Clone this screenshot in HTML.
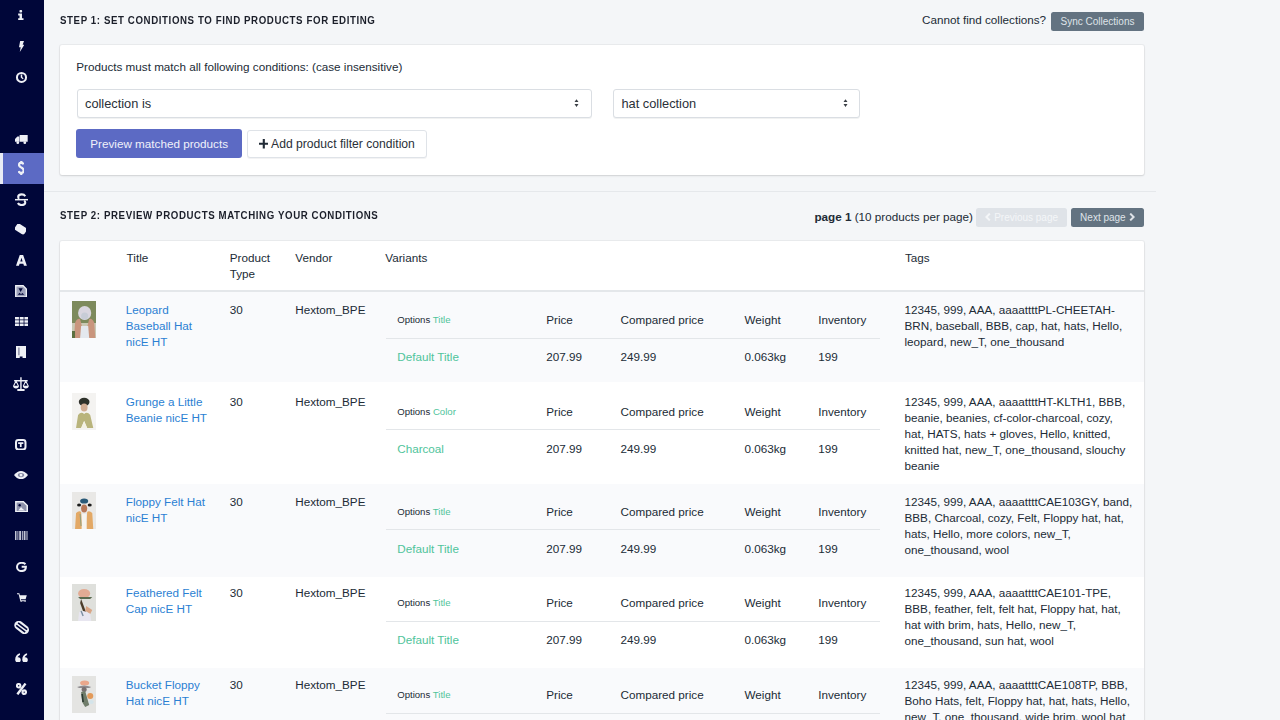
<!DOCTYPE html>
<html><head><meta charset="utf-8">
<style>
*{box-sizing:border-box;margin:0;padding:0}
html,body{width:1280px;height:720px;overflow:hidden;background:#f4f6f8;font-family:"Liberation Sans",sans-serif;color:#212b36;font-size:11.7px;line-height:16px}
.abs{position:absolute}
#side{position:absolute;left:0;top:0;width:44px;height:720px;background:#000639}
#side .act{position:absolute;left:2.6px;width:41.4px;height:30.9px;background:#5c6ac4}#side .actl{position:absolute;left:0;width:2.6px;height:30.9px;background:#e9ebf5}
#side .ic{position:absolute;display:block}
.step{position:absolute;font-weight:bold;font-size:9.7px;letter-spacing:0.6px;color:#1b1f2a;line-height:12px;transform:scaleY(1.17);transform-origin:0 0;white-space:nowrap}
.card{position:absolute;background:#fff;border-radius:2px;box-shadow:0 0 0 1px rgba(63,63,68,.05),0 1px 2px 0 rgba(63,63,68,.15)}
.sel{position:absolute;height:29px;background:#fff;border:1px solid #dadee3;border-radius:3px;box-shadow:0 1px 0 rgba(22,29,37,.06);font-size:12.8px;line-height:27px;padding-left:7.5px;color:#2a3038}
.sel .arr{position:absolute;right:11.5px;top:9.3px}
.btn{position:absolute;height:29px;border-radius:3px;line-height:29px;font-size:11.7px;text-align:center}
.sbtn{position:absolute;background:#637381;color:#dfe3e8;border-radius:2.5px;font-size:10px;text-align:center}
a{color:#2b7fd3;text-decoration:none}
.row{position:absolute;left:0;width:1084.3px}
.light{background:#f9fafc}
.c{position:absolute}
.vt{position:absolute;left:325.5px;width:494px}
.vh{position:absolute;left:0;top:0;width:494px;height:36.7px;border-bottom:1.5px solid #e3e6e9}
.vb{position:absolute;left:0;top:37px;width:494px;height:37px}
.opt{font-size:9.6px}
.g{color:#4fc49b}
</style></head><body>
<div id="side">
<div class="actl" style="top:152.9px"></div><div class="act" style="top:152.9px"></div>
<svg class="ic" style="left:18.30px;top:9.70px" width="5.60" height="10.20" viewBox="0 0 6.6 11.2" preserveAspectRatio="none" fill="#eef0f6"><rect x="1.7" y="0" width="3.2" height="2.7" rx="1"/><path d="M0.2 3.9H4.7V9H6.5V11.2H0.2V9H1.8V6H0.2z"/></svg>
<svg class="ic" style="left:18.70px;top:41.40px" width="5.00" height="10.90" viewBox="0 0 5.6 11.9" preserveAspectRatio="none" fill="#eef0f6"><path d="M1.3 0H5.6L4.1 4.2H5.8L0.9 11.9L1.9 6.7H0z"/></svg>
<svg class="ic" style="left:15.00px;top:71.70px" width="12.90" height="10.90" viewBox="0 0 13.9 11.9" preserveAspectRatio="none" fill="#eef0f6"><circle cx="7" cy="6" r="4.9" fill="none" stroke="#eef0f6" stroke-width="2.2"/><path d="M6.2 2.8H7.8V5.5L9.3 7L8.3 8L6.2 5.9z"/></svg>
<svg class="ic" style="left:15.40px;top:134.90px" width="12.70" height="9.00" viewBox="0 0 13.7 10.1" preserveAspectRatio="none" fill="#eef0f6"><path d="M5 0H13.7V7.6H5zM0 7.6V4.4L2.6 1.6H4.6V7.6z"/><circle cx="3" cy="8.6" r="1.5"/><circle cx="10.6" cy="8.6" r="1.5"/></svg>
<svg class="ic" style="left:17.90px;top:161.10px" width="6.50" height="14.00" viewBox="0 0 7.5 15" preserveAspectRatio="none" fill="#eef0f6"><path d="M6.4 3.6C6 2.6 5.1 1.9 3.75 1.9C2.2 1.9 1.1 2.8 1.1 4.1C1.1 5.5 2.2 6.1 3.75 6.9C5.4 7.7 6.5 8.5 6.5 10.2C6.5 11.8 5.3 12.9 3.75 12.9C2.2 12.9 1.1 12.1 0.7 10.8M3.75 0V1.9M3.75 12.9V15" fill="none" stroke="#eef0f6" stroke-width="2.5"/></svg>
<svg class="ic" style="left:14.75px;top:193.00px" width="13.35" height="13.40" viewBox="0 0 14.3 14.4" preserveAspectRatio="none" fill="#eef0f6"><path d="M11 3.4C10.3 2.2 9 1.5 7.2 1.5C5 1.5 3.4 2.7 3.4 4.4C3.4 5.3 3.8 5.9 4.5 6.3M9.8 8.2C10.6 8.7 11 9.4 11 10.3C11 12 9.4 13 7.2 13C5.2 13 3.8 12.2 3.1 10.8" fill="none" stroke="#eef0f6" stroke-width="2.2"/><rect x="0" y="6.4" width="14.3" height="1.6"/></svg>
<svg class="ic" style="left:14.75px;top:224.25px" width="11.50" height="10.25" viewBox="0 0 12.5 11.25" preserveAspectRatio="none" fill="#eef0f6"><rect x="-6.2" y="-4.1" width="12.4" height="8.2" rx="2.4" transform="translate(6.25 5.6) rotate(33)"/></svg>
<svg class="ic" style="left:16.00px;top:254.90px" width="10.90" height="10.85" viewBox="0 0 11.9 11.85" preserveAspectRatio="none" fill="#eef0f6"><path fill-rule="evenodd" d="M4.1 0H7.8L11.9 11.85H8.7L8 9.6H3.9L3.2 11.85H0zM4.7 7H7.2L5.95 3z"/></svg>
<svg class="ic" style="left:15.40px;top:284.90px" width="12.10" height="12.60" viewBox="0 0 13.1 13.6" preserveAspectRatio="none" fill="#eef0f6"><path d="M0.8 0.8H8.8L12.3 4.3V12.8H0.8z" fill="#9da1ba" stroke="#eef0f6" stroke-width="1.5"/><path d="M3.8 3.5H8.4L6.1 7.6z" fill="#000639"/><path d="M3 10.5L5 8.5 6.5 10 8 8.6 10 10.5z" fill="#000639"/></svg>
<svg class="ic" style="left:14.75px;top:316.75px" width="13.35" height="9.00" viewBox="0 0 14.3 10" preserveAspectRatio="none" fill="#eef0f6"><rect x="0.00" y="0.00" width="4.2" height="2.75"/><rect x="0.00" y="3.62" width="4.2" height="2.75"/><rect x="0.00" y="7.24" width="4.2" height="2.75"/><rect x="5.05" y="0.00" width="4.2" height="2.75"/><rect x="5.05" y="3.62" width="4.2" height="2.75"/><rect x="5.05" y="7.24" width="4.2" height="2.75"/><rect x="10.10" y="0.00" width="4.2" height="2.75"/><rect x="10.10" y="3.62" width="4.2" height="2.75"/><rect x="10.10" y="7.24" width="4.2" height="2.75"/></svg>
<svg class="ic" style="left:16.00px;top:345.50px" width="10.25" height="12.75" viewBox="0 0 11.25 13.75" preserveAspectRatio="none" fill="#eef0f6"><path d="M0 0H11.25V13.75H7.2V11.2H4.1V13.75H0z"/><rect x="2.6" y="1.6" width="1.2" height="8.4" fill="#000639" opacity=".55"/></svg>
<svg class="ic" style="left:12.90px;top:376.75px" width="15.85" height="14.00" viewBox="0 0 16.85 15" preserveAspectRatio="none" fill="#eef0f6"><path d="M1.2 3.3H15.6V4.7H1.2zM7.7 0.3H9.2V12.8H7.7zM4.6 12.8H12.3V15H4.6z"/><path d="M3.2 4.2L0.6 9.6M3.2 4.2L5.8 9.6M13.6 4.2L11 9.6M13.6 4.2L16.2 9.6" stroke="#eef0f6" stroke-width="1.1" fill="none"/><path d="M0 9.3H6.4C6.4 11 5 12.2 3.2 12.2C1.4 12.2 0 11 0 9.3zM10.45 9.3H16.85C16.85 11 15.45 12.2 13.65 12.2C11.85 12.2 10.45 11 10.45 9.3z"/></svg>
<svg class="ic" style="left:15.20px;top:438.80px" width="11.50" height="11.50" viewBox="0 0 12.5 12.5" preserveAspectRatio="none" fill="#eef0f6"><rect x="1.1" y="1.1" width="10.3" height="10.3" rx="2.6" fill="none" stroke="#eef0f6" stroke-width="2.2"/><path d="M3.4 3.5H9.1V5.3H7.2V8.8H5.3V5.3H3.4z"/></svg>
<svg class="ic" style="left:14.30px;top:471.30px" width="14.00" height="8.20" viewBox="0 0 15 9.2" preserveAspectRatio="none" fill="#eef0f6"><path d="M0 4.6C2.5 1.1 5 0 7.5 0S12.5 1.1 15 4.6C12.5 8.1 10 9.2 7.5 9.2S2.5 8.1 0 4.6z"/><ellipse cx="7.5" cy="4.6" rx="3.4" ry="2.4" fill="#000639" opacity=".45"/><circle cx="7.5" cy="4.6" r="1.5"/></svg>
<svg class="ic" style="left:15.20px;top:500.50px" width="13.10" height="11.50" viewBox="0 0 14.1 12.5" preserveAspectRatio="none" fill="#eef0f6"><path d="M0.9 0.8H9L13.2 5V11.7H0.9z" fill="#8d91ab" stroke="#eef0f6" stroke-width="1.6"/><circle cx="5" cy="4.6" r="1.3" fill="#000639"/><path d="M3.5 10.3L6.5 6.5 8.4 8.6 10.8 10.3z" fill="#eef0f6"/></svg>
<svg class="ic" style="left:14.80px;top:530.50px" width="13.50" height="9.80" viewBox="0 0 14.5 10.8" preserveAspectRatio="none" fill="#eef0f6"><g fill="#c3c6d6"><rect x="0" y="0" width="1.6" height="10.8"/><rect x="2.6" y="0" width="1" height="10.8"/><rect x="4.5" y="0" width="2" height="10.8"/><rect x="7.4" y="0" width="1" height="10.8"/><rect x="9.3" y="0" width="2" height="10.8"/><rect x="12.3" y="0" width="0.9" height="10.8"/><rect x="13.6" y="0" width="0.9" height="10.8"/></g></svg>
<svg class="ic" style="left:16.00px;top:562.30px" width="10.90" height="9.80" viewBox="0 0 11.9 10.8" preserveAspectRatio="none" fill="#eef0f6"><path d="M10.3 2.5C9.3 1.4 7.8 0.9 6.1 0.9C3.2 0.9 1.1 3 1.1 5.5C1.1 8 3.2 10 6 10C8.7 10 10.8 8.3 10.8 5.3H6.2" fill="none" stroke="#eef0f6" stroke-width="2.2"/></svg>
<svg class="ic" style="left:17.10px;top:592.50px" width="9.80" height="9.70" viewBox="0 0 10.8 10.7" preserveAspectRatio="none" fill="#eef0f6"><path d="M0 0.2H2.6L3.1 2.4H10.8L9.5 6.9H4.2L4.5 7.9H9.8V9H3.7L1.8 1.4H0z"/><circle cx="4.6" cy="9.9" r="0.9"/><circle cx="8.9" cy="9.9" r="0.9"/></svg>
<svg class="ic" style="left:12.80px;top:620.50px" width="17.30" height="13.00" viewBox="0 0 18.3 14" preserveAspectRatio="none" fill="#eef0f6"><rect x="-8.6" y="-4.8" width="17.2" height="9.6" rx="4.8" transform="translate(9.15 7) rotate(38)"/><path d="M3.4 4.6L12.9 12M5.4 2L14.9 9.4" stroke="#000639" stroke-width="1.7"/></svg>
<svg class="ic" style="left:15.00px;top:652.80px" width="13.00" height="9.70" viewBox="0 0 14 10.7" preserveAspectRatio="none" fill="#eef0f6"><path d="M0.2 7.3C0.2 3.6 2.2 1 5.4 0.2V2.2C3.8 2.8 3 4 2.9 5.1C3 4.9 3.2 4.8 3.4 4.8C5 4.8 6.2 6 6.2 7.6C6.2 9.3 5 10.6 3.3 10.6C1.4 10.6 0.2 9.3 0.2 7.3zM7.8 7.3C7.8 3.6 9.8 1 13 0.2V2.2C11.4 2.8 10.6 4 10.5 5.1C10.6 4.9 10.8 4.8 11 4.8C12.6 4.8 13.8 6 13.8 7.6C13.8 9.3 12.6 10.6 10.9 10.6C9 10.6 7.8 9.3 7.8 7.3z"/></svg>
<svg class="ic" style="left:16.00px;top:682.90px" width="10.90" height="11.90" viewBox="0 0 11.9 12.9" preserveAspectRatio="none" fill="#eef0f6"><path d="M10.4 0.6L1.5 12.3" stroke="#eef0f6" stroke-width="2.6"/><circle cx="2.9" cy="3" r="1.9" fill="none" stroke="#eef0f6" stroke-width="2.3"/><circle cx="9" cy="9.9" r="1.9" fill="none" stroke="#eef0f6" stroke-width="2.3"/></svg>
</div>

<div class="step" style="left:60px;top:12.6px">STEP 1: SET CONDITIONS TO FIND PRODUCTS FOR EDITING</div>
<div class="abs" style="left:922px;top:12.3px">Cannot find collections?</div>
<div class="sbtn" style="left:1050.7px;top:12px;width:93.6px;height:19.1px;line-height:19.1px">Sync Collections</div>

<div class="card" style="left:60px;top:44.5px;width:1084.3px;height:130px">
  <div class="abs" style="left:16.2px;top:14.5px">Products must match all following conditions: (case insensitive)</div>
  <div class="sel" style="left:16.5px;top:44px;width:515px">collection is<svg class="arr" width="5" height="8.2" viewBox="0 0 6 9" preserveAspectRatio="none"><path d="M3 0.3L5.4 3.4H.6zM3 8.7L.6 5.6h4.8z" fill="#3a3f45"/></svg></div>
  <div class="sel" style="left:553px;top:44px;width:247px">hat collection<svg class="arr" width="5" height="8.2" viewBox="0 0 6 9" preserveAspectRatio="none"><path d="M3 0.3L5.4 3.4H.6zM3 8.7L.6 5.6h4.8z" fill="#3a3f45"/></svg></div>
  <div class="btn" style="left:16px;top:84.7px;width:166.3px;background:#5c6ac4;color:#f0f1fa">Preview matched products</div>
  <div class="btn" style="left:186.9px;top:85.2px;width:180.3px;height:28.2px;line-height:26.2px;border:1px solid #dfe3e8;background:#fff;color:#2a3038;box-shadow:0 1px 0 rgba(22,29,37,.05);text-align:left;padding-left:11px;font-size:12.15px"><svg width="9.6" height="9.6" viewBox="0 0 10 10" style="display:inline-block;vertical-align:-1px;margin-right:2.6px"><path d="M3.9 0H6.1V3.9H10V6.1H6.1V10H3.9V6.1H0V3.9H3.9z" fill="#212b36"/></svg>Add product filter condition</div>
</div>

<div class="abs" style="left:44px;top:190.5px;width:1111.5px;height:1.3px;background:#e5e8eb"></div>

<div class="step" style="left:60px;top:208px">STEP 2: PREVIEW PRODUCTS MATCHING YOUR CONDITIONS</div>
<div class="abs" style="left:814.4px;top:208.6px"><b>page 1</b> (10 products per page)</div>
<div class="sbtn" style="left:976.3px;top:207.5px;width:90.6px;height:19.4px;line-height:19.4px;background:#dfe3e8;color:#f4f6f8"><svg width="6" height="8" viewBox="0 0 6 8" style="display:inline-block;vertical-align:-0.5px;margin-right:3px"><path d="M4.8 0.6L1.4 4L4.8 7.4" fill="none" stroke="currentColor" stroke-width="2"/></svg>Previous page</div>
<div class="sbtn" style="left:1070.6px;top:207.5px;width:73.6px;height:19.4px;line-height:19.4px">Next page<svg width="6" height="8" viewBox="0 0 6 8" style="display:inline-block;vertical-align:-0.5px;margin-left:3px"><path d="M1.2 0.6L4.6 4L1.2 7.4" fill="none" stroke="currentColor" stroke-width="2"/></svg></div>

<div class="card" id="tbl" style="left:60px;top:240.7px;width:1084.3px;height:520px;overflow:hidden">
<div class="c" style="left:66.6px;top:9px">Title</div><div class="c" style="left:169.7px;top:9px">Product<br>Type</div><div class="c" style="left:235.3px;top:9px">Vendor</div><div class="c" style="left:325.3px;top:9px">Variants</div><div class="c" style="left:845px;top:9px">Tags</div><div class="c" style="left:0;top:49.6px;width:1084.3px;height:1.4px;background:#e4e7ea"></div>
<div class="row light" style="top:51.30px;height:90.20px"><div class="c img" style="left:12px;top:9.3px;overflow:hidden;width:24.3px;height:37px"><svg width="24.3" height="37" viewBox="0 0 24 37" preserveAspectRatio="none"><filter id="bla" x="-10%" y="-10%" width="120%" height="120%"><feGaussianBlur stdDeviation="0.6"/></filter><g filter="url(#bla)"><rect width="24" height="37" fill="#c9c8b4"/><rect x="0" y="0" width="24" height="22" fill="#7d8a5c"/><ellipse cx="12.5" cy="12" rx="6.5" ry="7" fill="#d9d6df"/><ellipse cx="12.5" cy="15" rx="3.5" ry="3.5" fill="#c7ccd6"/><path d="M2 37L3 22Q5 17 8 18L10 26H15L17 18Q20 17 22 22L23 37z" fill="#c9957d"/><path d="M8 37L9 25H16L17 37z" fill="#e4e8ee"/><rect x="0" y="30" width="3" height="7" fill="#5d7040"/></g></svg></div><div class="c" style="left:65.8px;top:10.0px"><a>Leopard<br>Baseball Hat<br>nicE HT</a></div><div class="c" style="left:169.7px;top:10.0px">30</div><div class="c" style="left:235.3px;top:10.0px">Hextom_BPE</div><div class="vt" style="top:10.0px"><div class="vh"><span class="c opt" style="left:11.7px;top:10.2px">Options <span class="g">Title</span></span><span class="c" style="left:160.7px;top:10.2px">Price</span><span class="c" style="left:235px;top:10.2px">Compared price</span><span class="c" style="left:359px;top:10.2px">Weight</span><span class="c" style="left:432.7px;top:10.2px">Inventory</span></div><div class="vb"><span class="c g" style="left:11.7px;top:10.2px">Default Title</span><span class="c" style="left:160.7px;top:10.2px">207.99</span><span class="c" style="left:235px;top:10.2px">249.99</span><span class="c" style="left:359px;top:10.2px">0.063kg</span><span class="c" style="left:432.7px;top:10.2px">199</span></div></div><div class="c" style="left:844.5px;top:10.0px;white-space:nowrap">12345, 999, AAA, aaaattttPL-CHEETAH-<br>BRN, baseball, BBB, cap, hat, hats, Hello,<br>leopard, new_T, one_thousand</div></div>
<div class="row" style="top:141.50px;height:101.60px"><div class="c img" style="left:12px;top:10.5px;overflow:hidden;width:24.3px;height:37px"><svg width="24.3" height="37" viewBox="0 0 24 37" preserveAspectRatio="none"><filter id="blb" x="-10%" y="-10%" width="120%" height="120%"><feGaussianBlur stdDeviation="0.6"/></filter><g filter="url(#blb)"><rect width="24" height="37" fill="#f4f3f1"/><ellipse cx="12" cy="9" rx="5.3" ry="4.2" fill="#2f302c"/><ellipse cx="12" cy="14.5" rx="3.4" ry="4" fill="#d2ae94"/><path d="M4 35L6 22Q9 18 12 21Q15 18 18 22L21 35H15L12 28L9 35z" fill="#b9b47c"/><path d="M9 35L12 28L15 35z" fill="#f4f1e4"/></g></svg></div><div class="c" style="left:65.8px;top:11.5px"><a>Grunge a Little<br>Beanie nicE HT</a></div><div class="c" style="left:169.7px;top:11.5px">30</div><div class="c" style="left:235.3px;top:11.5px">Hextom_BPE</div><div class="vt" style="top:11.5px"><div class="vh"><span class="c opt" style="left:11.7px;top:10.2px">Options <span class="g">Color</span></span><span class="c" style="left:160.7px;top:10.2px">Price</span><span class="c" style="left:235px;top:10.2px">Compared price</span><span class="c" style="left:359px;top:10.2px">Weight</span><span class="c" style="left:432.7px;top:10.2px">Inventory</span></div><div class="vb"><span class="c g" style="left:11.7px;top:10.2px">Charcoal</span><span class="c" style="left:160.7px;top:10.2px">207.99</span><span class="c" style="left:235px;top:10.2px">249.99</span><span class="c" style="left:359px;top:10.2px">0.063kg</span><span class="c" style="left:432.7px;top:10.2px">199</span></div></div><div class="c" style="left:844.5px;top:11.5px;white-space:nowrap">12345, 999, AAA, aaaattttHT-KLTH1, BBB,<br>beanie, beanies, cf-color-charcoal, cozy,<br>hat, HATS, hats + gloves, Hello, knitted,<br>knitted hat, new_T, one_thousand, slouchy<br>beanie</div></div>
<div class="row light" style="top:243.10px;height:93.20px"><div class="c img" style="left:12px;top:8.5px;overflow:hidden;width:24.3px;height:37px"><svg width="24.3" height="37" viewBox="0 0 24 37" preserveAspectRatio="none"><filter id="blc" x="-10%" y="-10%" width="120%" height="120%"><feGaussianBlur stdDeviation="0.6"/></filter><g filter="url(#blc)"><rect width="24" height="37" fill="#e9e8e6"/><ellipse cx="12" cy="9" rx="4" ry="2.6" fill="#2a5a78"/><ellipse cx="7" cy="13" rx="2" ry="1.6" fill="#1c1c1c"/><ellipse cx="17.5" cy="13" rx="2" ry="1.6" fill="#1c1c1c"/><ellipse cx="12" cy="16.5" rx="3" ry="4" fill="#b87858"/><path d="M3 37L4 21Q7 18 9 20L10 37zM14 37L15 20Q17 18 20 21L21 37z" fill="#e3a865"/><path d="M9.5 37L10 22H14L14.5 37z" fill="#f6f3ee"/><path d="M8 22L9 34" stroke="#8fa080" stroke-width="1"/></g></svg></div><div class="c" style="left:65.8px;top:10.0px"><a>Floppy Felt Hat<br>nicE HT</a></div><div class="c" style="left:169.7px;top:10.0px">30</div><div class="c" style="left:235.3px;top:10.0px">Hextom_BPE</div><div class="vt" style="top:10.0px"><div class="vh"><span class="c opt" style="left:11.7px;top:10.2px">Options <span class="g">Title</span></span><span class="c" style="left:160.7px;top:10.2px">Price</span><span class="c" style="left:235px;top:10.2px">Compared price</span><span class="c" style="left:359px;top:10.2px">Weight</span><span class="c" style="left:432.7px;top:10.2px">Inventory</span></div><div class="vb"><span class="c g" style="left:11.7px;top:10.2px">Default Title</span><span class="c" style="left:160.7px;top:10.2px">207.99</span><span class="c" style="left:235px;top:10.2px">249.99</span><span class="c" style="left:359px;top:10.2px">0.063kg</span><span class="c" style="left:432.7px;top:10.2px">199</span></div></div><div class="c" style="left:844.5px;top:10.0px;white-space:nowrap">12345, 999, AAA, aaaattttCAE103GY, band,<br>BBB, Charcoal, cozy, Felt, Floppy hat, hat,<br>hats, Hello, more colors, new_T,<br>one_thousand, wool</div></div>
<div class="row" style="top:336.30px;height:91.00px"><div class="c img" style="left:12px;top:7.3px;overflow:hidden;width:24.3px;height:37px"><svg width="24.3" height="37" viewBox="0 0 24 37" preserveAspectRatio="none"><filter id="bld" x="-10%" y="-10%" width="120%" height="120%"><feGaussianBlur stdDeviation="0.6"/></filter><g filter="url(#bld)"><rect width="24" height="37" fill="#dfe0dc"/><ellipse cx="12" cy="9.5" rx="6" ry="4.5" fill="#e2ab94"/><path d="M6 13H20L18 15H8z" fill="#5a6a50"/><path d="M9 15L15 31L13 33L8 19z" fill="#4b3c2c"/><path d="M14 22L20 26L18 30L13 27z" fill="#d9a687"/><path d="M6 37L7 28Q12 25 18 30L19 37z" fill="#e8e6f0"/><path d="M9 27L11 32" stroke="#7b8ea0" stroke-width="1.4"/></g></svg></div><div class="c" style="left:65.8px;top:8.1px"><a>Feathered Felt<br>Cap nicE HT</a></div><div class="c" style="left:169.7px;top:8.1px">30</div><div class="c" style="left:235.3px;top:8.1px">Hextom_BPE</div><div class="vt" style="top:8.1px"><div class="vh"><span class="c opt" style="left:11.7px;top:10.2px">Options <span class="g">Title</span></span><span class="c" style="left:160.7px;top:10.2px">Price</span><span class="c" style="left:235px;top:10.2px">Compared price</span><span class="c" style="left:359px;top:10.2px">Weight</span><span class="c" style="left:432.7px;top:10.2px">Inventory</span></div><div class="vb"><span class="c g" style="left:11.7px;top:10.2px">Default Title</span><span class="c" style="left:160.7px;top:10.2px">207.99</span><span class="c" style="left:235px;top:10.2px">249.99</span><span class="c" style="left:359px;top:10.2px">0.063kg</span><span class="c" style="left:432.7px;top:10.2px">199</span></div></div><div class="c" style="left:844.5px;top:8.1px;white-space:nowrap">12345, 999, AAA, aaaattttCAE101-TPE,<br>BBB, feather, felt, felt hat, Floppy hat, hat,<br>hat with brim, hats, Hello, new_T,<br>one_thousand, sun hat, wool</div></div>
<div class="row light" style="top:427.30px;height:102.00px"><div class="c img" style="left:12px;top:8.0px;overflow:hidden;width:24.3px;height:37px"><svg width="24.3" height="37" viewBox="0 0 24 37" preserveAspectRatio="none"><filter id="ble" x="-10%" y="-10%" width="120%" height="120%"><feGaussianBlur stdDeviation="0.6"/></filter><g filter="url(#ble)"><rect width="24" height="37" fill="#e4e4e2"/><ellipse cx="12.5" cy="7" rx="4.5" ry="2.5" fill="#eaa78c"/><path d="M5 11Q12 8 19 11L17 12H7z" fill="#8f8c90"/><ellipse cx="12" cy="13.5" rx="2.5" ry="2.5" fill="#7a6f70"/><path d="M9 16L13 15L17 29L13 31L10 26z" fill="#6f7d6a"/><path d="M10 18L11 26" stroke="#2c3a30" stroke-width="1.6"/><circle cx="18" cy="20" r="3" fill="#e39a5a"/><ellipse cx="19" cy="26" rx="2.5" ry="2" fill="#d4e4ea"/></g></svg></div><div class="c" style="left:65.8px;top:9.2px"><a>Bucket Floppy<br>Hat nicE HT</a></div><div class="c" style="left:169.7px;top:9.2px">30</div><div class="c" style="left:235.3px;top:9.2px">Hextom_BPE</div><div class="vt" style="top:9.2px"><div class="vh"><span class="c opt" style="left:11.7px;top:10.2px">Options <span class="g">Title</span></span><span class="c" style="left:160.7px;top:10.2px">Price</span><span class="c" style="left:235px;top:10.2px">Compared price</span><span class="c" style="left:359px;top:10.2px">Weight</span><span class="c" style="left:432.7px;top:10.2px">Inventory</span></div><div class="vb"><span class="c g" style="left:11.7px;top:10.2px">Default Title</span><span class="c" style="left:160.7px;top:10.2px">207.99</span><span class="c" style="left:235px;top:10.2px">249.99</span><span class="c" style="left:359px;top:10.2px">0.063kg</span><span class="c" style="left:432.7px;top:10.2px">199</span></div></div><div class="c" style="left:844.5px;top:9.2px;white-space:nowrap">12345, 999, AAA, aaaattttCAE108TP, BBB,<br>Boho Hats, felt, Floppy hat, hat, hats, Hello,<br>new_T, one_thousand, wide brim, wool hat</div></div>
</div>

</body></html>
